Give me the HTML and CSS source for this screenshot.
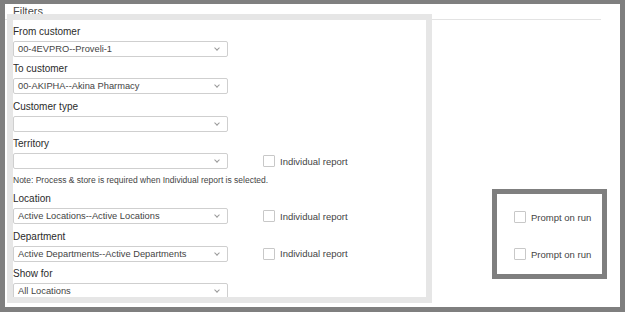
FILE: index.html
```html
<!DOCTYPE html>
<html lang="en">
<head>
  <meta charset="UTF-8">
  <meta name="viewport" content="width=device-width, initial-scale=1.0">
  <link rel="stylesheet" href="styles.css">
  <title>Filters</title>
</head>
<body>
  <div class="frame">
    <div class="filters-title">Filters</div>

    <div class="main">
      <div class="highlight">
        <div class="field">
          <label>From customer</label>
          <div class="select">00-4EVPRO--Proveli-1<span class="chev"></span></div>
        </div>

        <div class="field">
          <label>To customer</label>
          <div class="select">00-AKIPHA--Akina Pharmacy<span class="chev"></span></div>
        </div>

        <div class="field">
          <label>Customer type</label>
          <div class="select"><span class="chev"></span></div>
        </div>

        <div class="field">
          <label>Territory</label>
          <div class="row">
            <div class="select"><span class="chev"></span></div>
            <div class="check"><span class="box"></span>Individual report</div>
          </div>
        </div>

        <p class="note">Note: Process &amp; store is required when Individual report is selected.</p>

        <div class="field">
          <label>Location</label>
          <div class="row">
            <div class="select">Active Locations--Active Locations<span class="chev"></span></div>
            <div class="check"><span class="box"></span>Individual report</div>
          </div>
        </div>

        <div class="field">
          <label>Department</label>
          <div class="row">
            <div class="select">Active Departments--Active Departments<span class="chev"></span></div>
            <div class="check"><span class="box"></span>Individual report</div>
          </div>
        </div>

        <div class="field">
          <label>Show for</label>
          <div class="select">All Locations<span class="chev"></span></div>
        </div>
      </div>

      <div class="prompts">
        <div class="check prompt"><span class="box"></span>Prompt on run</div>
        <div class="check prompt"><span class="box"></span>Prompt on run</div>
      </div>
    </div>
  </div>
</body>
</html>
```

FILE: styles.css
```css
body {
  margin: 0;
  font-family: "Liberation Sans", Arial, sans-serif;
  color: #333;
}
.frame {
  width: 625px;
  height: 312px;
  box-sizing: border-box;
  border: 5px solid #7f7f7f;
  border-top-width: 4px;
  background: #fff;
  overflow: hidden;
}
.filters-title {
  font-size: 11px;
  line-height: 15px;
  color: #4a4a4a;
  padding-left: 8px;
  margin-right: 19px;
  border-bottom: 1px solid #e3e3e3;
}
.main {
  display: flex;
  align-items: flex-start;
  margin-top: -6px;
  position: relative;
}
.highlight {
  width: 425px;
  height: 289px;
  box-sizing: border-box;
  margin-left: 2px;
  border: 6px solid #e6e6e6;
  background: #fff;
  padding-top: 3.5px;
  overflow: hidden;
}
.field {
  margin-bottom: 4.5px;
}
.field label {
  display: block;
  font-size: 10px;
  line-height: 15px;
  margin-bottom: 2px;
  color: #2b2b2b;
}
.row {
  display: flex;
  align-items: center;
}
.select {
  position: relative;
  width: 215px;
  height: 16px;
  box-sizing: border-box;
  border: 1px solid #cfcfcf;
  border-radius: 2px;
  padding-left: 4px;
  font-size: 9.3px;
  line-height: 14px;
  color: #444;
}
.chev {
  position: absolute;
  right: 8px;
  top: 4px;
  width: 3px;
  height: 3px;
  border-right: 1px solid #999;
  border-bottom: 1px solid #999;
  transform: rotate(45deg);
}
.check {
  display: flex;
  align-items: center;
  font-size: 9.5px;
  color: #444;
  margin-left: 35px;
}
.box {
  width: 12px;
  height: 12px;
  box-sizing: border-box;
  border: 1px solid #c8c8c8;
  border-radius: 1px;
  margin-right: 5px;
  background: #fff;
}
.note {
  margin: 4px 0 4.5px;
  font-size: 8.5px;
  line-height: 13px;
  color: #444;
}
.prompts {
  margin-left: 60px;
  margin-top: 175px;
  width: 115px;
  box-sizing: border-box;
  border: 5px solid #7f7f7f;
  padding: 15px 0 12px 17px;
}
.prompt {
  margin-left: 0;
  height: 16px;
}
.prompt + .prompt {
  margin-top: 21px;
}
```
